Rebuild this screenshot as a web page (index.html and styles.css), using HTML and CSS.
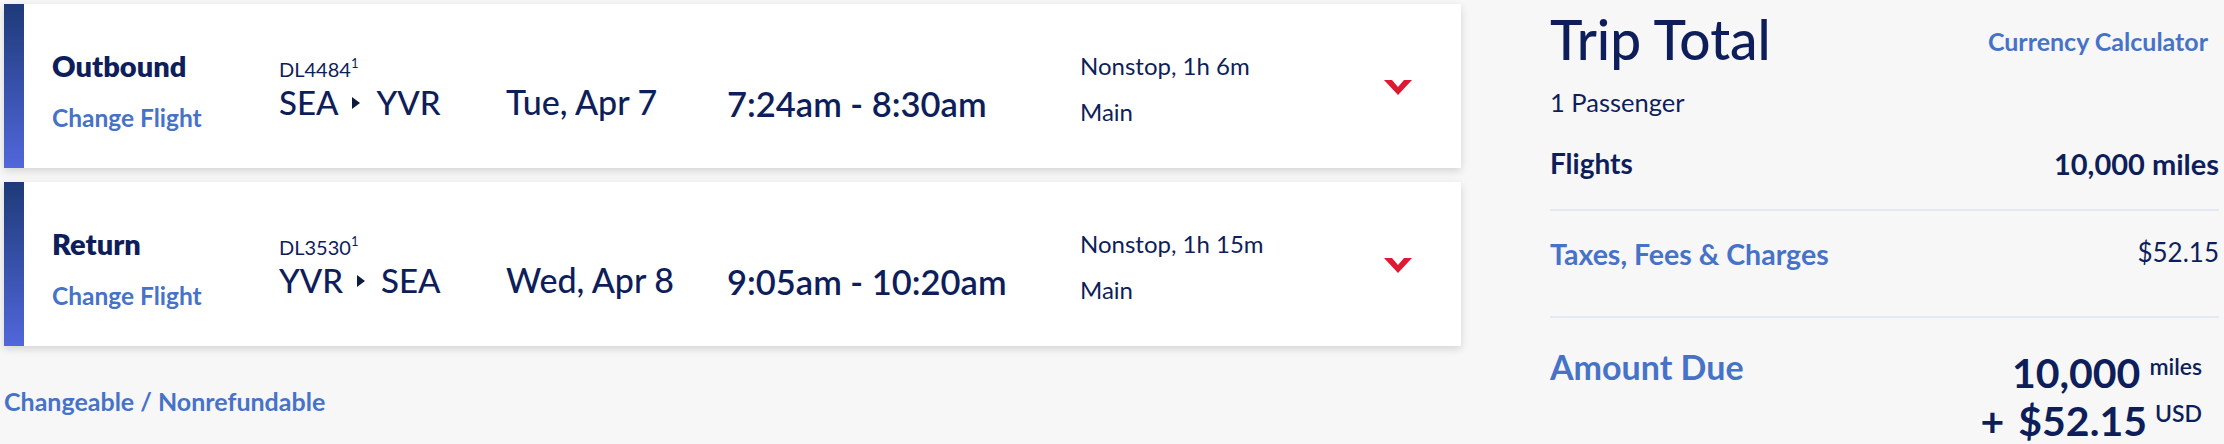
FILE: index.html
```html
<!DOCTYPE html>
<html>
<head>
  <link rel="stylesheet" href="styles.css">
</head>
<body>
  <div class="page">
    <div class="trips">
      <div class="card">
        <div class="card-bar"></div>
        <div class="card-body">
          <div class="leg">
            <div class="leg-title">Outbound</div>
            <div class="link leg-change">Change Flight</div>
          </div>
          <div class="flight">
            <div class="flight-num">DL4484<sup>1</sup></div>
            <div class="route">SEA<svg class="route-arrow" width="8" height="12" viewBox="0 0 8 12"><path d="M0 0 L8 6 L0 12 Z"/></svg>YVR</div>
          </div>
          <div class="date">Tue, Apr 7</div>
          <div class="times">7:24am - 8:30am</div>
          <div class="info">
            <div>Nonstop, 1h 6m</div>
            <div class="cabin">Main</div>
          </div>
          <div class="toggle">
            <svg width="28" height="15" viewBox="0 0 28 15"><path d="M0 0 H8 L14 7 L20 0 H28 L14 15 Z"/></svg>
          </div>
        </div>
      </div>

      <div class="card">
        <div class="card-bar"></div>
        <div class="card-body">
          <div class="leg">
            <div class="leg-title">Return</div>
            <div class="link leg-change">Change Flight</div>
          </div>
          <div class="flight">
            <div class="flight-num">DL3530<sup>1</sup></div>
            <div class="route">YVR<svg class="route-arrow" width="8" height="12" viewBox="0 0 8 12"><path d="M0 0 L8 6 L0 12 Z"/></svg>SEA</div>
          </div>
          <div class="date">Wed, Apr 8</div>
          <div class="times">9:05am - 10:20am</div>
          <div class="info">
            <div>Nonstop, 1h 15m</div>
            <div class="cabin">Main</div>
          </div>
          <div class="toggle">
            <svg width="28" height="15" viewBox="0 0 28 15"><path d="M0 0 H8 L14 7 L20 0 H28 L14 15 Z"/></svg>
          </div>
        </div>
      </div>

      <div class="link fare-rules">Changeable / Nonrefundable</div>
    </div>

    <div class="summary">
      <div class="summary-head">
        <div class="summary-title">Trip Total</div>
        <div class="link calc">Currency Calculator</div>
      </div>
      <div class="passengers">1 Passenger</div>
      <div class="line flights-line">
        <div>Flights</div>
        <div class="flights-value">10,000 miles</div>
      </div>
      <div class="line taxes-line">
        <div class="link">Taxes, Fees &amp; Charges</div>
        <div class="taxes-value">$52.15</div>
      </div>
      <div class="line due-line">
        <div class="link due-label">Amount Due</div>
        <div class="due-amount">
          <div>10,000<span class="unit unit-miles">miles</span></div>
          <div><span class="plus">+</span>$52.15<span class="unit unit-usd">USD</span></div>
        </div>
      </div>
    </div>
  </div>
</body>
</html>
```

FILE: styles.css
```css
body {
  margin: 0;
  padding: 0;
  background-color: #f7f7f7;
  font-family: Lato, "Noto Sans", sans-serif;
  color: #0e1e5a;
}

.page {
  display: flex;
  gap: 89px;
  padding: 4px 5px 0 4px;
}

.link {
  color: #4673c8;
  font-weight: 700;
}

/* flight cards */
.trips {
  width: 1457px;
  display: flex;
  flex-direction: column;
  gap: 14px;
}

.card {
  display: flex;
  height: 164px;
  background: #fff;
  box-shadow: 0 3px 8px rgba(0, 0, 0, 0.14);
}

.card-bar {
  width: 20px;
  background: linear-gradient(#1e3a78, #5167db);
}

.card-body {
  flex: 1;
  display: grid;
  grid-template-columns: 227px 227px 221px 353px 1fr 28px;
  align-items: start;
  padding: 0 49px 0 28px;
  line-height: 1.2;
}

.leg {
  padding-top: 45px;
}

.leg-title {
  font-size: 29px;
  font-weight: 800;
}

.leg-change {
  margin-top: 19px;
  font-size: 24.5px;
}

.flight {
  padding-top: 53px;
}

.flight-num {
  font-size: 20px;
}

.flight-num sup {
  font-size: 13px;
  vertical-align: 9px;
  line-height: 0;
}

.route {
  margin-top: 2px;
  font-size: 33px;
  font-weight: 500;
}

.route-arrow {
  margin: 0 16px 0 14px;
  vertical-align: 6px;
  fill: #0b1a3d;
}

.date {
  padding-top: 78px;
  font-size: 34px;
  font-weight: 500;
}

.times {
  padding-top: 79px;
  font-size: 34.5px;
  font-weight: 600;
}

.info {
  padding-top: 48px;
  font-size: 24px;
}

.cabin {
  margin-top: 17px;
}

.toggle {
  padding-top: 76px;
  line-height: 0;
}

.toggle svg {
  fill: #e01933;
}

.fare-rules {
  margin-top: 26px;
  font-size: 25px;
  line-height: 1.2;
}

/* trip total */
.summary {
  width: 669px;
  line-height: 1.2;
}

.summary-head {
  display: flex;
  justify-content: space-between;
  align-items: flex-start;
  margin-top: 2px;
}

.summary-title {
  font-size: 55px;
  font-weight: 500;
}

.calc {
  margin: 20px 11px 0 0;
  font-size: 25px;
}

.passengers {
  margin-top: 15px;
  font-size: 25.5px;
}

.line {
  display: flex;
  justify-content: space-between;
  align-items: flex-start;
}

.flights-line {
  margin-top: 29px;
  padding-bottom: 28px;
  border-bottom: 2px solid #e3e8f1;
  font-size: 28px;
  font-weight: 700;
}

.flights-value {
  font-size: 29px;
}

.taxes-line {
  margin-top: 26px;
  padding-bottom: 44px;
  border-bottom: 2px solid #e3e8f1;
  font-size: 28.5px;
}

.taxes-value {
  font-size: 26px;
}

.due-line {
  margin-top: 29px;
}

.due-label {
  font-size: 34px;
}

.due-amount {
  margin-top: -1px;
  padding-right: 17px;
  text-align: right;
  font-size: 41px;
  font-weight: 700;
  line-height: 40px;
}

.unit {
  font-size: 23px;
  font-weight: 600;
}

.unit-miles {
  margin-left: 9px;
  vertical-align: 13px;
}

.unit-usd {
  margin-left: 8px;
  vertical-align: 14px;
}

.plus {
  margin-right: 14px;
}
```
